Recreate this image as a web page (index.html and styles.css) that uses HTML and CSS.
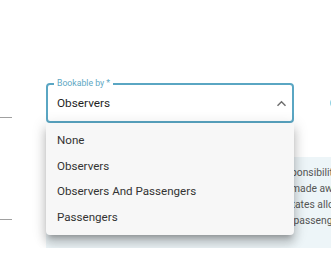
FILE: index.html
```html
<!DOCTYPE html>
<html lang="en">
<head>
<meta charset="utf-8">
<title>Bookable by</title>
<link rel="stylesheet" href="styles.css">
</head>
<body>
<div class="page">
  <div class="row row-top">
    <div class="stub stub-top"></div>
    <div class="field">
      <span class="field-label">Bookable by *</span>
      <span class="field-value">Observers</span>
      <svg class="chevron" width="11" height="7" viewBox="0 0 11 7"><path d="M1.5 5.8 L5.5 1.8 L9.5 5.8" fill="none" stroke="#6f6f6f" stroke-width="1.5"/></svg>
      <ul class="menu">
        <li class="menu-item">None</li>
        <li class="menu-item">Observers</li>
        <li class="menu-item">Observers And Passengers</li>
        <li class="menu-item">Passengers</li>
      </ul>
    </div>
    <svg class="info" width="14" height="14" viewBox="0 0 14 14"><circle cx="7" cy="7" r="6" fill="#8fd2e3"/></svg>
  </div>
  <div class="row row-bottom">
    <div class="stub stub-bottom"></div>
    <div class="note">
      <div class="line"><span class="pre">Bookable by defines who carries the res</span>ponsibility for the booking.</div>
      <div class="line"><span class="pre">Pilots and crew should be</span>made aware of who can book.</div>
      <div class="line"><span class="pre pre-wide">The chosen setting dict</span>ates allowed bookers:</div>
      <div class="line"><span class="pre">observers and/or</span>&nbsp;passengers only.</div>
    </div>
  </div>
</div>
</body>
</html>
```

FILE: styles.css
```css
html, body {
  margin: 0;
  background: #ffffff;
  overflow: hidden;
}

body {
  font-family: Roboto, "Liberation Sans", sans-serif;
  color: #212121;
}

.page {
  padding-top: 83px;
}

.row {
  display: flex;
}

.row-top {
  height: 40px;
}

.stub {
  flex: none;
  width: 12px;
  margin-right: 34px;
}

.stub-top {
  height: 34px;
  border-bottom: 1px solid #a0a0a0;
}

.field {
  position: relative;
  flex: none;
  width: 248px;
  box-sizing: border-box;
  border: 2px solid #5aa6c3;
  border-radius: 4px;
  display: flex;
  align-items: center;
  padding: 0 5px 0 9px;
}

.field-label {
  position: absolute;
  left: 6px;
  top: -7px;
  padding: 0 3px;
  background: #ffffff;
  font-size: 8.7px;
  line-height: 11px;
  color: #5ea8c4;
}

.field-value {
  font-size: 11.8px;
  color: #1f1f1f;
}

.chevron {
  margin-left: auto;
  display: block;
}

.menu {
  position: absolute;
  top: calc(100% + 2px);
  left: -2px;
  right: -2px;
  margin: 0;
  padding: 5px 0 4px;
  list-style: none;
  background: #f7f7f7;
  border-radius: 0 0 4px 4px;
  box-shadow: 0 5px 5px -3px rgba(0, 0, 0, 0.22), 0 8px 10px 1px rgba(0, 0, 0, 0.15), 0 3px 14px 2px rgba(0, 0, 0, 0.12);
  z-index: 2;
}

.menu-item {
  height: 25.7px;
  line-height: 25.7px;
  padding-left: 11px;
  font-size: 11.6px;
  color: #333333;
}

.info {
  flex: none;
  align-self: center;
  margin-left: 35px;
  display: block;
}

.row-bottom {
  margin-top: 34px;
}

.stub-bottom {
  height: 62px;
  border-bottom: 1px solid #a0a0a0;
}

.note {
  flex: 1;
  height: 91px;
  box-sizing: border-box;
  padding: 8px 0 0 12px;
  background: #edf5f8;
  overflow: hidden;
  font-size: 10.3px;
  line-height: 16px;
  color: #555555;
}

.line {
  white-space: nowrap;
}

.pre {
  display: inline-block;
  width: 233px;
  text-align: right;
  overflow: hidden;
  vertical-align: top;
}

.pre-wide {
  width: 237px;
}
```
